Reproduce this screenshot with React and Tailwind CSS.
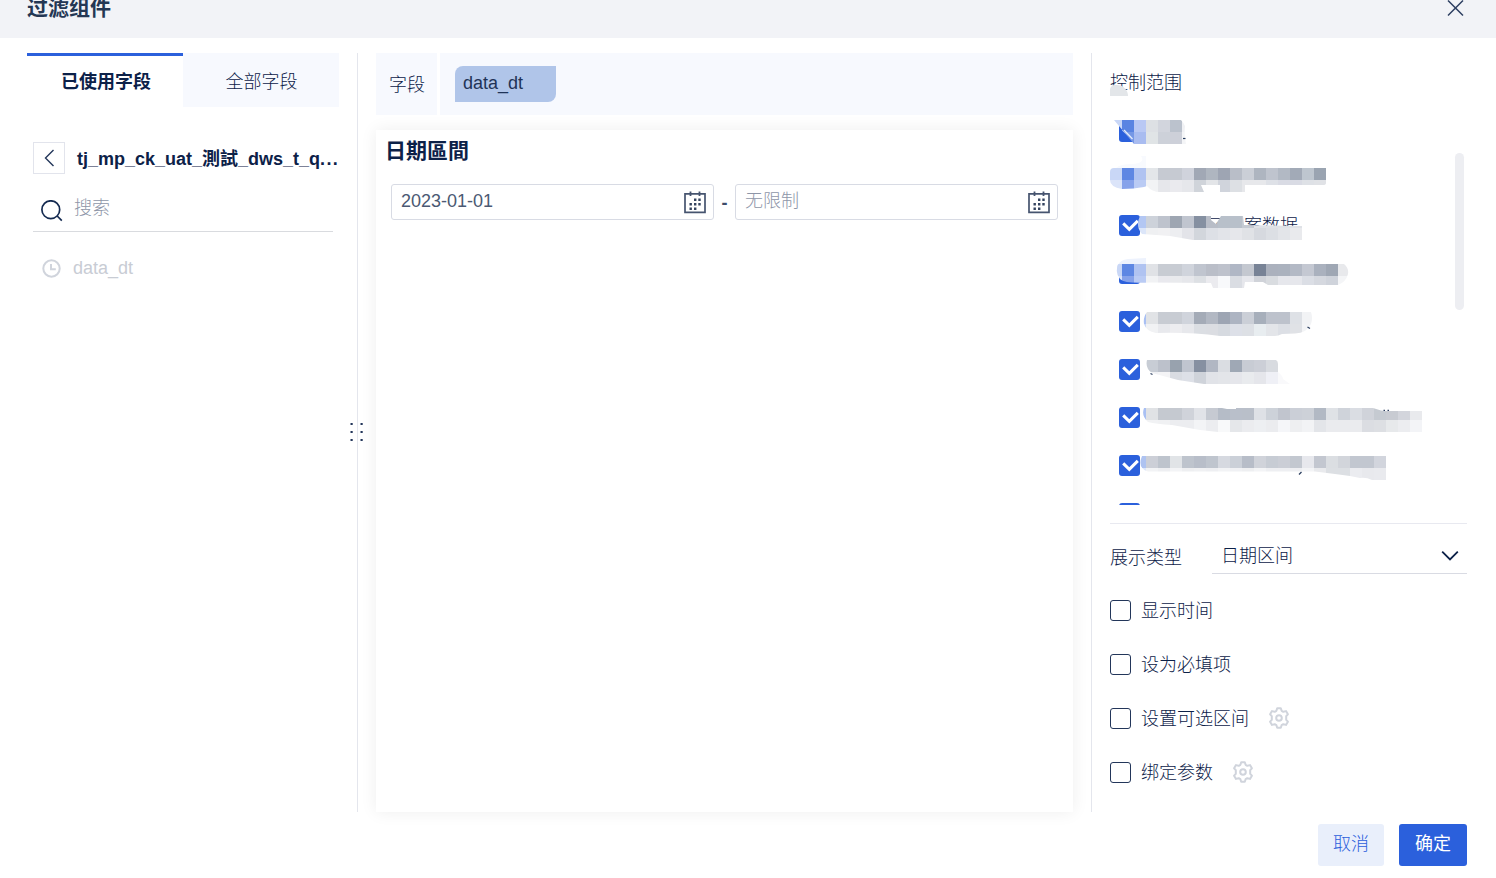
import React from 'react';

const maskedRows = [
  {
    top: 'c9d7f7 5a84e2 b9c8f4 dde0e4 d2d5dd bbc2cd f0f1f4',
    bottom: 'c9d7f7 7698e6 a9bcf0 e0e4e6 cdd1d9 cdd0d9 f4f5f7',
    clip: 'M4 12 H71 Q73 14 75 18 Q74 26 76 36 H24 Z',
    mark: 'M73 30.5 H75.5',
  },
  {
    top: 'c9d7f6 5e87e3 b0c3f1 e3e6e9 c6cad2 c6cad2 d0d3dc a1a8b5 afb6c0 9ea5b3 b9bec8 cbcfd7 aeb5c0 bfc4ce b2b9c4 a2aab7 bec6cf 9aa4b1',
    bottom: 'dbe4f9 86a2ea bacbf4 f2f3f5 e6e7eb eaeaee e6e7eb d0d4da e3e5e8 d0d4dc dde0e4 e7e8eb e7e8eb dee1e7 d9dbe4 d9dbe4 dee1e6 e0e2e6',
    clip: 'M4 12 H216 V27 Q216 29 213 29 H135 V36 H110 V29 H91 L94 36 H50 Q42 36 37 30 L34 31 Q24 33 12 33 Q0 31 0 24 V16 Q0 12 4 12 Z',
    halo: 'M31 0 H36 V12 H6 Q10 8 22 8 Q36 7 31 0 Z',
    haloFill: '#f8fafe',
    mark: '',
  },
  {
    text: '了备案数据',
    top: '- - b3c7f3 cdd2da bec3cd 9ea6b2 c0c5cf 8590a1 b8bdc7 b8c0ca b8c0ca c5cad2 dfe2e7 dfe2e7 dfe2e7 dfe2e7',
    bottom: '- - dce6f9 eff0f2 f1f1f3 edeef1 e3e4e9 d2d6dc dde0e6 e2e4e9 e6e7eb e0e2e6 d6d9df dcdfe4 e3e5e9 e9eaed',
    clip: 'M30 12 H101 V16 L106 20 L111 12 H133 L134 21 L192 22 V36 H83 L60 32 L32 30 Q25 22 30 12 Z',
    cover: 'M111.5 6 H133 V13 H111.5 Z',
    mark: '',
  },
  {
    top: 'c9d7f6 5e87e3 b0c3f1 e0e2e6 c8ccd3 c8ccd3 d0d4dc c0c5cf babec8 bec2cc b0b7c5 c4c8d0 788396 abb1bd abb2be b3b9c5 c4c8d2 aab1be 9fa7b4 e8e9ec',
    bottom: 'dbe4f9 86a2ea bacbf4 f1f2f4 e9e9ee e9eaed e6e7eb dde0e4 ebebef f8f9fb dadde3 e6e7ec d0d3d9 d9dce0 e6e7ec e6e7ec dbdee5 d5d8df cfd3db f4f5f7',
    clip: 'M9 12 H234 Q239 16 238 22 Q236 30 228 33 H158 L153 30 H135 L134 36 H103 L101 31 L40 30.5 Q15 32 10 27 Q6 22 7 17 Q7 12 9 12 Z',
    halo: 'M8 13 Q10 8 18 7 L36 6 V13 Z',
    haloFill: '#edf2fd',
    cover: 'M8 10 H14 V12 H8 Z',
    mark: '',
  },
  {
    top: '- - a9c0f3 e1e3e6 c8ccd3 c8ccd3 d0d4dc a4abb7 b2b8c3 9da5b3 adb4c2 cbcfd7 a7afbb bdc2cc bdc2cc dee1e6 f2f3f5',
    bottom: '- - c9d7f7 f1f2f4 e8e9ed ededf0 e7e8ec dbdee3 dbdde2 d6dae0 dde0e8 dde0e5 e8edf0 e3e5e9 dcdfe5 e0e2e6 f3f4f6',
    clip: 'M37 12 H201 Q203 18 201 24 Q197 33 185 33.5 L172 34 Q168 36 165 36 H110 Q80 32 46 33 Q36 31 34 24 Q33 17 37 12 Z',
    mark: 'M197.5 27 L200 28.5',
  },
  {
    top: '- - - c8cdd5 bcc1cb 98a2ae c0c5cf 8690a1 b1b7c3 dadde2 9fa8b5 c8ccd4 cccfd7 d8dbe0 f9f9fb',
    bottom: '- - - f0f1f4 f4f4f6 d9dce2 dde0e7 cfd3da e1e3e8 e3e5e9 e5e6eb e9ebee e5e6eb eff0f6 f9f9fb',
    clip: 'M37 12 H166 Q168 13 168 16 V24 Q173 28 173 31 L180 36 H94 L68 32 L42 25 Q35 20 37 12 Z',
    mark: 'M40.5 25.5 L42.5 26.5',
  },
  {
    top: '- - a9c0f3 e0e2e5 c5c9d0 c5c9d0 d0d3da e1e3e8 c6cad2 b5bcc7 b9bfca b9bfc9 dee1e6 cdd2d9 c1c5ce cbcfd7 cdd1d8 b2b9c4 dfe2e6 cfd3da dadde3 d0d3da c5cad1 c8cbd2 d3d5dc e9eaed',
    bottom: '- - c9d7f7 f1f2f4 f0f1f3 ecedf0 ecedf0 f3f4f6 ecedf0 f8f9fa e5e7ea ebecef edeff2 ebecef f5f6f9 eeeff1 f2f3f5 e3e5e9 eaebee eaebee eaebee dbdde2 dddfe3 e7e9eb ecedf0 f3f4f7',
    clip: 'M34 12 H112 L117 13 H126 V12 H263 L271 14.5 L275 15 H312 V36 H108 L90 34 L62 29 Q46 28 38 26 Q31 20 34 12 Z',
    mark: 'M273.5 14.3 H275 M277.5 14.3 H279',
  },
  {
    top: '- - aec3f1 cccfd7 bec4cd e1e4e7 bec4cd b8bec9 bfc5ce d6d9e0 cbd0d8 b7bdc8 d0d3da c7ccd4 cbced6 c3c8d0 e7e8ed c3c7d0 dbdee2 d2d5db c2c7d0 c2c7d0 d2d5dd',
    bottom: '- - dde7f9 f2f3f5 eeeff2 f3f4f6 eeeff1 f0f1f3 eeeff2 f2f3f5 f0f1f4 eeeff1 f3f4f6 eeeff2 eeeff2 eeeff2 f3f4f6 e9eaed dcdfe3 dcdfe3 ebecf0 e8e9ed e9eaee',
    clip: 'M32 12 H276 V36 H262 Q256 33 250 34 L240 32 L225 30 L205 27.5 H38 Q27 24 32 12 Z',
    mark: 'M189 30.5 L191.5 28',
  },
];

const options = [
  { label: '显示时间' },
  { label: '设为必填项' },
  { label: '设置可选区间', gear: true },
  { label: '绑定参数', gear: true },
];

function Mosaic({ row, id }) {
  const lines = [row.top.split(' '), row.bottom.split(' ')];
  return (
    <svg className="absolute top-0 left-0" width="340" height="48" viewBox="0 0 340 48">
      <clipPath id={`mask-${id}`}>
        <path d={row.clip} />
      </clipPath>
      {row.cover && <path d={row.cover} fill="#fff" />}
      {row.halo && <path d={row.halo} fill={row.haloFill} />}
      <g clipPath={`url(#mask-${id})`} shapeRendering="crispEdges">
        {lines.map((cells, y) =>
          cells.map((c, x) =>
            c === '-' ? null : (
              <rect key={`${x}-${y}`} x={x * 12} y={12 + y * 12} width="12" height="12" fill={`#${c}`} />
            )
          )
        )}
      </g>
      {id === 0 && <path d="M14 22 L22.5 31" stroke="#e6edfb" strokeWidth="1.3" />}
      <path d={row.mark} stroke="#2a3d5e" strokeWidth="1.2" fill="none" />
    </svg>
  );
}

function CheckedBox() {
  return (
    <span className="flex h-[21px] w-[21px] shrink-0 rounded-[3px] bg-[#2b60dc]">
      <svg width="21" height="21" viewBox="0 0 21 21" fill="none">
        <path d="M4.2 8.4 L10.3 14.4 L18.8 5.9" stroke="#fff" strokeWidth="3" />
      </svg>
    </span>
  );
}

function CalendarIcon() {
  return (
    <svg width="22" height="23" viewBox="0 0 22 23" fill="none" className="shrink-0">
      <path d="M1 2.8 H21 V21.3 H1 Z" stroke="#46546f" strokeWidth="1.7" />
      <path d="M6.5 0.5 V5 M15.5 0.5 V5" stroke="#46546f" strokeWidth="1.8" />
      <path
        d="M10 7.5h2.4v2.4H10z M14.3 7.5h2.4v2.4h-2.4z M5.5 12h2.4v2.4H5.5z M10 12h2.4v2.4H10z M14.3 12h2.4v2.4h-2.4z M5.5 16.5h2.4v2.4H5.5z M10 16.5h2.4v2.4H10z"
        fill="#34435f"
      />
    </svg>
  );
}

function GearIcon() {
  return (
    <svg width="22" height="22" viewBox="0 0 22 22" fill="none" stroke="#d0d4dc" strokeWidth="2" strokeLinejoin="round">
      <path d="M9.2 1.2 H12.8 L13.6 3.8 L15.3 4.8 L18 4.1 L19.9 7.3 L18.2 9.2 V12.8 L19.9 14.7 L18 17.9 L15.3 17.2 L13.6 18.2 L12.8 20.8 H9.2 L8.4 18.2 L6.7 17.2 L4 17.9 L2.1 14.7 L3.8 12.8 V9.2 L2.1 7.3 L4 4.1 L6.7 4.8 L8.4 3.8 Z" />
      <circle cx="11" cy="11" r="2.8" />
    </svg>
  );
}

function DateInput({ children, muted }) {
  return (
    <div className="flex h-9 w-[323px] items-center justify-between rounded-[3px] border border-[#d8dbe4] pr-[7px] pl-[9px]">
      <span className={muted ? 'pb-[3px] text-[#8e96a8]' : 'pb-[3px] text-[#4b5973]'}>{children}</span>
      <CalendarIcon />
    </div>
  );
}

export default function App() {
  return (
    <div className="h-[878px] w-[1496px] overflow-hidden bg-white font-['Liberation_Sans','Noto_Sans_CJK_SC',sans-serif] text-[18px] leading-[26px] font-light text-[#0c2148]">
      {/* Header */}
      <div className="flex h-[38px] items-start justify-between bg-[#f2f3f7] pr-8 pl-[27px]">
        <h1 className="-mt-[7px] text-[21px] leading-[30px] font-bold text-[#243754]">过滤组件</h1>
        <svg width="17" height="17" viewBox="0 0 17 17" fill="none" stroke="#2f4062" strokeWidth="1.5">
          <path d="M1 0.5 L16 15.5 M16 0.5 L1 15.5" />
        </svg>
      </div>

      <div className="flex h-[774px] pt-[15px]">
        {/* Field list */}
        <div className="relative w-[358px] border-r border-[#e4e6ed] pl-[27px]">
          <div className="flex w-[312px]">
            <div className="flex h-[54px] w-[156px] items-center justify-center border-t-[3px] border-[#2b60dc] pl-[2px] font-bold">
              已使用字段
            </div>
            <div className="flex h-[54px] w-[156px] items-center justify-center bg-[#f7f9fe] pt-1 pl-px">全部字段</div>
          </div>

          <div className="mt-[35px] ml-[6px] flex items-center">
            <div className="flex h-8 w-8 items-center justify-center border border-[#e2e4ec]">
              <svg width="12" height="18" viewBox="0 0 12 18" fill="none" stroke="#23365a" strokeWidth="1.4">
                <path d="M10.5 1 L2.5 9 L10.5 17" />
              </svg>
            </div>
            <span className="pt-[2px] pl-3 font-bold whitespace-nowrap">
              tj_mp_ck_uat_測試_dws_t_q<span className="tracking-[1.3px]">...</span>
            </span>
          </div>

          <div className="mt-[10px] ml-[6px] flex h-12 w-[300px] items-center border-b border-[#d9dbdf] pl-2">
            <svg width="22" height="22" viewBox="0 0 22 22" fill="none" stroke="#142a50" strokeWidth="1.7" className="mt-[7px]">
              <circle cx="9.8" cy="9.7" r="8.9" />
              <path d="M16.2 16 L20.8 20.6" />
            </svg>
            <span className="pl-[11px] text-[#8e96a8]">搜索</span>
          </div>

          <div className="mt-[23px] flex items-center pl-[15px] text-[#c8ccd4]">
            <svg width="19" height="19" viewBox="0 0 19 19" fill="none" stroke="#d0d4dc" strokeWidth="2">
              <circle cx="9.5" cy="9.5" r="8.2" />
              <path d="M9 5 V10.3 H13.8" />
            </svg>
            <span className="pl-[12px]">data_dt</span>
          </div>

          {/* Resize handle */}
          <svg className="absolute top-[369px] left-[350px]" width="14" height="20" fill="#23365a">
            <path d="M.5 1h2.2v2H.5z M10.5 1h2.2v2h-2.2z M.5 9h2.2v2H.5z M10.5 9h2.2v2h-2.2z M.5 17h2.2v2H.5z M10.5 17h2.2v2h-2.2z" />
          </svg>
        </div>

        {/* Preview */}
        <div className="ml-[18px] flex w-[697px] flex-col">
          <div className="flex h-[62px] bg-[#f7f9fe]">
            <div className="flex w-16 items-center border-r-[3px] border-white pt-[2px] pl-[13px]">字段</div>
            <div className="mt-[13px] ml-[15px] h-9 w-[101px] rounded-tl-lg rounded-br-lg bg-[#b0c5e9] pt-[4px] pl-2 text-[#1f3357]">
              data_dt
            </div>
          </div>
          <div className="mt-[15px] flex-1 bg-white shadow-[0_0_16px_rgba(0,0,0,0.07)]">
            <h2 className="pt-[6px] pl-[9px] text-[21px] leading-[30px] font-bold">日期區間</h2>
            <div className="mt-[18px] flex items-center pl-[15px]">
              <DateInput>2023-01-01</DateInput>
              <span className="w-[21px] pt-[2px] text-center font-bold text-[#3d4c69]">-</span>
              <DateInput muted>无限制</DateInput>
            </div>
          </div>
        </div>

        {/* Settings */}
        <div className="ml-[18px] w-[405px] border-l border-[#e4e6ed] pl-[18px]">
          <div className="relative h-[55px] pt-[17px]">
            控制范围
            <span className="absolute top-8 left-0 h-[11px] w-[18px] rounded-tl-[6px] rounded-tr-[14px] bg-[#e3e6e9]" />
          </div>
          <div className="flex h-[397px] overflow-hidden">
            <div className="w-[345px]">
              {maskedRows.map((row, i) => (
                <div className={i === 0 ? 'relative flex h-12 pt-[13px] pl-[9px]' : 'relative flex h-12 pt-[11px] pl-[9px]'} key={i}>
                  {i !== 1 && <CheckedBox />}
                  {row.text && <span className="-mt-[2px] pl-[68px]">{row.text}</span>}
                  <Mosaic row={row} id={i} />
                </div>
              ))}
              <div className="pt-[11px] pl-[9px]">
                <CheckedBox />
              </div>
            </div>
            <div className="mt-[45px] h-[157px] w-[9px] rounded-full bg-[#edeef2]" />
          </div>

          <div className="mt-[18px] flex w-[357px] justify-between border-t border-[#e8e9f0] pt-[14px]">
            <span className="pt-[7px]">展示类型</span>
            <div className="flex h-9 w-[255px] items-center justify-between border-b border-[#d9dbe3] pr-2 pl-[9px]">
              <span>日期区间</span>
              <svg width="18" height="11" viewBox="0 0 18 11" fill="none" stroke="#0c2148" strokeWidth="1.8">
                <path d="M1.2 1.7 L9 9.5 L16.8 1.7" />
              </svg>
            </div>
          </div>

          <div className="mt-[23px] flex flex-col gap-7">
            {options.map((item) => (
              <div className="flex h-[26px] items-center" key={item.label}>
                <span className="h-[21px] w-[21px] rounded-[3px] border border-[#23365a]" />
                <span className="pt-px pl-[10px]">{item.label}</span>
                {item.gear && (
                  <span className="pl-[19px]">
                    <GearIcon />
                  </span>
                )}
              </div>
            ))}
          </div>
        </div>
      </div>

      {/* Footer */}
      <div className="flex justify-end gap-[15px] pt-3 pr-[29px]">
        <button className="h-[42px] w-[66px] rounded-[3px] bg-[#e9effb] pb-[2px] text-[#2b60dc]">取消</button>
        <button className="h-[42px] w-[68px] rounded-[3px] bg-[#2b60dc] pb-[2px] font-normal text-white">确定</button>
      </div>
    </div>
  );
}
